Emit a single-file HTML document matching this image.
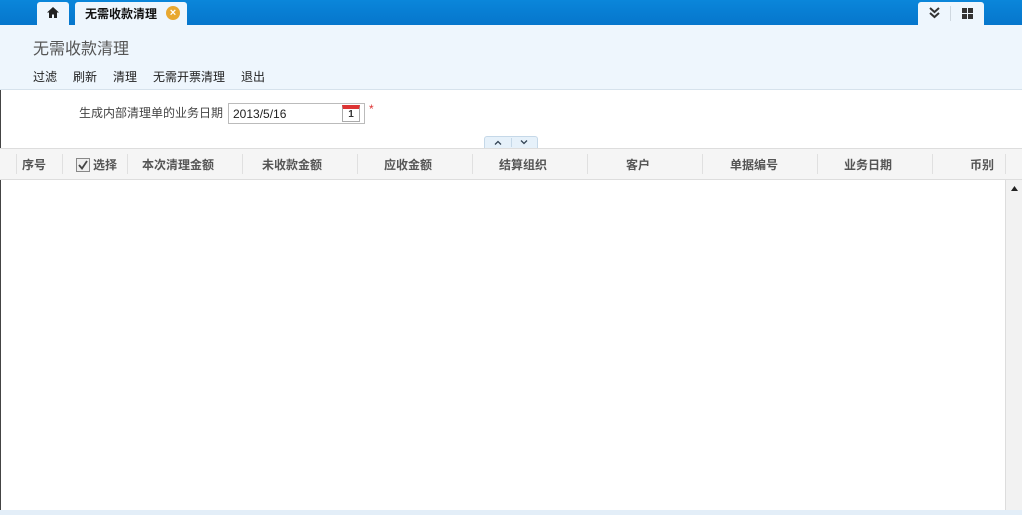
<!DOCTYPE html>
<html><head><meta charset="utf-8"><style>
*{margin:0;padding:0;box-sizing:border-box}
body{width:1022px;height:515px;overflow:hidden;background:#fff;font-family:"Liberation Sans","Noto Sans CJK SC",sans-serif;font-size:12px;color:#333;position:relative}
.abs{position:absolute}
.top{left:0;top:0;width:1022px;height:25px;background:linear-gradient(#0a86da,#0676cc)}
.tab{top:2px;height:23px;background:#eef6fd;border-radius:3px 3px 0 0}
.hdr{left:0;top:25px;width:1022px;height:65px;background:#eef6fd;border-bottom:1px solid #d6e2ec}
.th{top:148px;height:32px;background:#f5f5f5;border-top:1px solid #ddd;border-bottom:1px solid #ddd;left:0;width:1022px}
.th span{position:absolute;top:7px;font-weight:bold;color:#555;font-size:12px}
.sep{position:absolute;top:5px;width:1px;height:20px;background:#e0e0e0}
</style></head><body>
<div class="abs" style="left:0;top:0;width:1px;height:515px;background:#444"></div>
<div class="abs top"></div>
<div class="abs tab" style="left:37px;width:32px"><svg class="abs" style="left:10px;top:5px" width="12" height="11" viewBox="0 0 12 11"><path d="M6 0L0 5.5h2V11h3V7.5h2V11h3V5.5h2z" fill="#222"/></svg></div>
<div class="abs tab" style="left:75px;width:112px"><span class="abs" style="left:10px;top:3px;font-weight:bold;color:#111">无需收款清理</span><div class="abs" style="left:91px;top:4px;width:14px;height:14px;border-radius:50%;background:#e8a830;color:#fff;font-size:11px;line-height:14px;text-align:center;font-weight:bold">×</div></div>
<div class="abs tab" style="left:918px;width:66px"><svg class="abs" style="left:11px;top:5px" width="11" height="12" viewBox="0 0 11 12"><path d="M1 1l4.5 4 4.5-4M1 6l4.5 4 4.5-4" stroke="#333" stroke-width="2" fill="none"/></svg><div class="abs" style="left:32px;top:4px;width:1px;height:15px;background:#cfd8e0"></div><svg class="abs" style="left:44px;top:6px" width="11" height="11"><rect x="0" y="0" width="5" height="5" fill="#333"/><rect x="6" y="0" width="5" height="5" fill="#333"/><rect x="0" y="6" width="5" height="5" fill="#333"/><rect x="6" y="6" width="5" height="5" fill="#333"/></svg></div>
<div class="abs hdr"></div>
<div class="abs" style="left:33px;top:35px;font-size:16px;color:#555">无需收款清理</div>
<div class="abs" style="left:33px;top:68px;color:#222">过滤</div>
<div class="abs" style="left:73px;top:68px;color:#222">刷新</div>
<div class="abs" style="left:113px;top:68px;color:#222">清理</div>
<div class="abs" style="left:153px;top:68px;color:#222">无需开票清理</div>
<div class="abs" style="left:241px;top:68px;color:#222">退出</div>
<div class="abs" style="left:79px;top:104px;color:#444">生成内部清理单的业务日期</div>
<div class="abs" style="left:228px;top:103px;width:137px;height:21px;border:1px solid #bbb;background:#fff"><span class="abs" style="left:4px;top:3px;color:#222">2013/5/16</span><div class="abs" style="left:113px;top:1px;width:18px;height:17px;border:1px solid #aaa;border-top:4px solid #d33;background:#fff;font-size:10px;font-weight:bold;text-align:center;line-height:12px">1</div></div>
<div class="abs" style="left:369px;top:102px;color:#d33">*</div>
<div class="abs" style="left:484px;top:136px;width:54px;height:12px;background:#e6f1fa;border:1px solid #c5d8e8;border-bottom:none;border-radius:3px 3px 0 0">
<svg class="abs" style="left:9px;top:3px" width="8" height="5"><path d="M1 4.5l3-3 3 3" stroke="#345" stroke-width="1.3" fill="none"/></svg>
<span class="abs" style="left:26px;top:1px;width:1px;height:9px;background:#c5d8e8"></span>
<svg class="abs" style="left:35px;top:3px" width="8" height="5"><path d="M1 0.5l3 3 3-3" stroke="#345" stroke-width="1.3" fill="none"/></svg></div>
<div class="abs th">
<span style="left:22px">序号</span><div class="sep" style="left:62px"></div>
<svg class="abs" style="left:76px;top:9px" width="14" height="14"><rect x="0.5" y="0.5" width="13" height="13" fill="#eee" stroke="#888"/><path d="M3 7l3 3.5L11 3" stroke="#444" stroke-width="1.8" fill="none"/></svg><span style="left:93px">选择</span><div class="sep" style="left:127px"></div>
<span style="left:142px">本次清理金额</span><div class="sep" style="left:242px"></div>
<span style="left:262px">未收款金额</span><div class="sep" style="left:357px"></div>
<span style="left:384px">应收金额</span><div class="sep" style="left:472px"></div>
<span style="left:499px">结算组织</span><div class="sep" style="left:587px"></div>
<span style="left:626px">客户</span><div class="sep" style="left:702px"></div>
<span style="left:730px">单据编号</span><div class="sep" style="left:817px"></div>
<span style="left:844px">业务日期</span><div class="sep" style="left:932px"></div>
<span style="left:970px">币别</span><div class="sep" style="left:1005px"></div>
<div class="sep" style="left:16px"></div>
</div>
<div class="abs" style="left:1005px;top:180px;width:17px;height:330px;background:#f2f2f2;border-left:1px solid #ddd"><svg class="abs" style="left:5px;top:6px" width="7" height="5"><path d="M0 5L3.5 0 7 5z" fill="#222"/></svg></div>
<div class="abs" style="left:0;top:510px;width:1022px;height:5px;background:#e3eef8"></div>
</body></html>
